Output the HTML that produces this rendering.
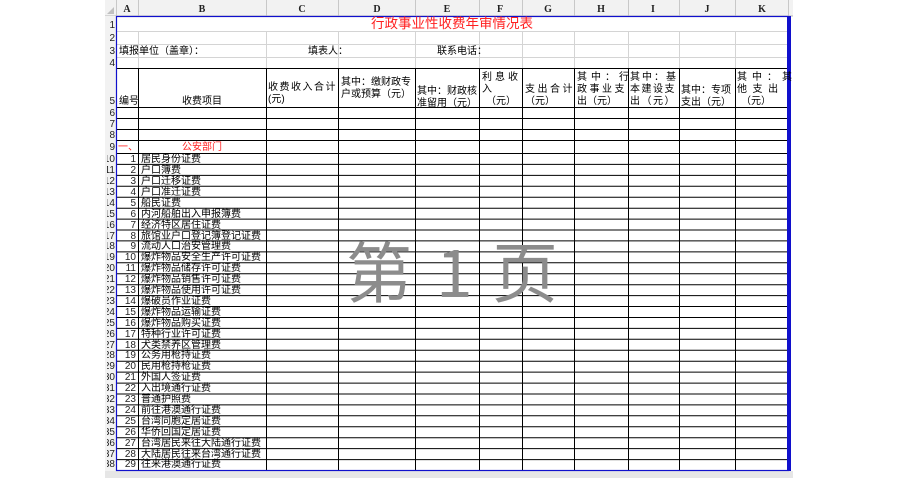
<!DOCTYPE html>
<html><head><meta charset="utf-8"><style>
html,body{margin:0;padding:0;background:#fff;width:900px;height:478px;overflow:hidden}
svg{display:block}
text{font-family:"Liberation Sans","Noto Sans CJK SC",sans-serif}
.t{font-size:10px;fill:#000}
.h{font-size:10px;fill:#222;font-family:"Liberation Serif","Noto Serif CJK SC",serif}
.r{font-size:10px;fill:#222;text-anchor:end}
.wm{font-size:66px;fill:#8c8c8c;font-family:"Noto Sans CJK SC","Liberation Sans",sans-serif}
</style></head><body>
<svg width="900" height="478" viewBox="0 0 900 478">
<defs><clipPath id="rh"><rect x="107" y="0" width="9" height="478"/></clipPath></defs>
<rect x="105" y="0" width="688" height="16" fill="#f2f2f2"/>
<polygon points="107,14 114,14 114,7" fill="#c0c0c0"/>
<line x1="105" y1="16" x2="793" y2="16" stroke="#b8b8b8"/>
<rect x="105" y="16" width="11" height="455" fill="#f2f2f2"/>
<rect x="105" y="471" width="688" height="7" fill="#e6e6e6"/>
<g stroke="#c8c8c8" stroke-width="1">
<line x1="116.5" y1="0" x2="116.5" y2="16"/><line x1="138.5" y1="0" x2="138.5" y2="16"/><line x1="266.5" y1="0" x2="266.5" y2="16"/><line x1="338.5" y1="0" x2="338.5" y2="16"/><line x1="415.5" y1="0" x2="415.5" y2="16"/><line x1="479.5" y1="0" x2="479.5" y2="16"/><line x1="522.5" y1="0" x2="522.5" y2="16"/><line x1="574.5" y1="0" x2="574.5" y2="16"/><line x1="628.5" y1="0" x2="628.5" y2="16"/><line x1="679.5" y1="0" x2="679.5" y2="16"/><line x1="735.5" y1="0" x2="735.5" y2="16"/><line x1="788.5" y1="0" x2="788.5" y2="16"/>
</g>
<g class="h" text-anchor="middle" font-weight="bold">
<text x="127" y="12" class="h">A</text><text x="202" y="12" class="h">B</text><text x="302" y="12" class="h">C</text><text x="377" y="12" class="h">D</text><text x="447" y="12" class="h">E</text><text x="500" y="12" class="h">F</text><text x="548" y="12" class="h">G</text><text x="601" y="12" class="h">H</text><text x="653" y="12" class="h">I</text><text x="707" y="12" class="h">J</text><text x="762" y="12" class="h">K</text>
</g>
<g stroke="#d4d4d4">
<line x1="116" y1="31.5" x2="788" y2="31.5"/><line x1="116" y1="44.5" x2="788" y2="44.5"/><line x1="116" y1="57.5" x2="788" y2="57.5"/>
<line x1="138.5" y1="31" x2="138.5" y2="68"/><line x1="266.5" y1="31" x2="266.5" y2="68"/><line x1="338.5" y1="31" x2="338.5" y2="68"/><line x1="415.5" y1="31" x2="415.5" y2="68"/><line x1="479.5" y1="31" x2="479.5" y2="68"/><line x1="522.5" y1="31" x2="522.5" y2="68"/><line x1="574.5" y1="31" x2="574.5" y2="68"/><line x1="628.5" y1="31" x2="628.5" y2="68"/><line x1="679.5" y1="31" x2="679.5" y2="68"/><line x1="735.5" y1="31" x2="735.5" y2="68"/>
</g>
<g stroke="#000" stroke-width="1">
<line x1="116" y1="68.5" x2="788" y2="68.5"/><line x1="116" y1="107.5" x2="788" y2="107.5"/><line x1="116" y1="118.5" x2="788" y2="118.5"/><line x1="116" y1="129.5" x2="788" y2="129.5"/><line x1="116" y1="140.5" x2="788" y2="140.5"/><line x1="116" y1="153.5" x2="788" y2="153.5"/>
<line x1="116" y1="164.4" x2="788" y2="164.4"/><line x1="116" y1="175.4" x2="788" y2="175.4"/><line x1="116" y1="186.3" x2="788" y2="186.3"/><line x1="116" y1="197.2" x2="788" y2="197.2"/><line x1="116" y1="208.2" x2="788" y2="208.2"/><line x1="116" y1="219.1" x2="788" y2="219.1"/><line x1="116" y1="230" x2="788" y2="230"/><line x1="116" y1="240.9" x2="788" y2="240.9"/><line x1="116" y1="251.9" x2="788" y2="251.9"/><line x1="116" y1="262.8" x2="788" y2="262.8"/><line x1="116" y1="273.7" x2="788" y2="273.7"/><line x1="116" y1="284.7" x2="788" y2="284.7"/><line x1="116" y1="295.6" x2="788" y2="295.6"/><line x1="116" y1="306.5" x2="788" y2="306.5"/><line x1="116" y1="317.5" x2="788" y2="317.5"/><line x1="116" y1="328.4" x2="788" y2="328.4"/><line x1="116" y1="339.3" x2="788" y2="339.3"/><line x1="116" y1="350.3" x2="788" y2="350.3"/><line x1="116" y1="361.2" x2="788" y2="361.2"/><line x1="116" y1="372.1" x2="788" y2="372.1"/><line x1="116" y1="383.1" x2="788" y2="383.1"/><line x1="116" y1="394" x2="788" y2="394"/><line x1="116" y1="404.9" x2="788" y2="404.9"/><line x1="116" y1="415.8" x2="788" y2="415.8"/><line x1="116" y1="426.8" x2="788" y2="426.8"/><line x1="116" y1="437.7" x2="788" y2="437.7"/><line x1="116" y1="448.6" x2="788" y2="448.6"/><line x1="116" y1="459.6" x2="788" y2="459.6"/>
<line x1="138.5" y1="68" x2="138.5" y2="471"/><line x1="266.5" y1="68" x2="266.5" y2="471"/><line x1="338.5" y1="68" x2="338.5" y2="471"/><line x1="415.5" y1="68" x2="415.5" y2="471"/><line x1="479.5" y1="68" x2="479.5" y2="471"/><line x1="522.5" y1="68" x2="522.5" y2="471"/><line x1="574.5" y1="68" x2="574.5" y2="471"/><line x1="628.5" y1="68" x2="628.5" y2="471"/><line x1="679.5" y1="68" x2="679.5" y2="471"/><line x1="735.5" y1="68" x2="735.5" y2="471"/>
</g>
<rect x="116.5" y="16.5" width="672" height="454" fill="none" stroke="#1010cc" stroke-width="1.2"/>
<rect x="787" y="16" width="4" height="455" fill="#1010cc"/>
<g clip-path="url(#rh)">
<text x="115" y="28" class="r">1</text><text x="115" y="41" class="r">2</text><text x="115" y="54" class="r">3</text><text x="115" y="66" class="r">4</text><text x="115" y="104" class="r">5</text><text x="115" y="116" class="r">6</text><text x="115" y="127" class="r">7</text><text x="115" y="138" class="r">8</text><text x="115" y="150" class="r">9</text>
<text x="115" y="162" class="r">10</text><text x="115" y="173" class="r">11</text><text x="115" y="184" class="r">12</text><text x="115" y="195" class="r">13</text><text x="115" y="206" class="r">14</text><text x="115" y="217" class="r">15</text><text x="115" y="228" class="r">16</text><text x="115" y="239" class="r">17</text><text x="115" y="249" class="r">18</text><text x="115" y="260" class="r">19</text><text x="115" y="271" class="r">20</text><text x="115" y="282" class="r">21</text><text x="115" y="293" class="r">22</text><text x="115" y="304" class="r">23</text><text x="115" y="315" class="r">24</text><text x="115" y="326" class="r">25</text><text x="115" y="337" class="r">26</text><text x="115" y="348" class="r">27</text><text x="115" y="358" class="r">28</text><text x="115" y="369" class="r">29</text><text x="115" y="380" class="r">30</text><text x="115" y="391" class="r">31</text><text x="115" y="402" class="r">32</text><text x="115" y="413" class="r">33</text><text x="115" y="424" class="r">34</text><text x="115" y="435" class="r">35</text><text x="115" y="446" class="r">36</text><text x="115" y="457" class="r">37</text><text x="115" y="467" class="r">38</text>
</g>
<text x="452" y="28" text-anchor="middle" font-size="13.5" fill="#ff2020">行政事业性收费年审情况表</text>
<text x="119" y="54" class="t">填报单位（盖章）：</text>
<text x="308" y="54" class="t">填表人：</text>
<text x="437" y="54" class="t">联系电话：</text>
<g class="t">
<text x="119" y="104" class="t">编号</text>
<text x="202" y="104" class="t" text-anchor="middle">收费项目</text>
<text x="268" y="90" class="t" letter-spacing="1.5">收费收入合计</text><text x="268" y="102" class="t">(元)</text>
<text x="341" y="85" class="t">其中：缴财政专</text><text x="341" y="97" class="t">户或预算（元）</text>
<text x="417" y="94" class="t">其中：财政核</text><text x="417" y="106" class="t">准留用（元）</text>
<text x="482" y="80" class="t" letter-spacing="3">利息收</text><text x="482" y="92" class="t">入</text><text x="486" y="104" class="t">（元）</text>
<text x="525" y="92" class="t" letter-spacing="2.5">支出合计</text><text x="525" y="104" class="t">（元）</text>
<text x="577" y="80" class="t" letter-spacing="4">其中：行</text><text x="577" y="92" class="t" letter-spacing="2.5">政事业支</text><text x="577" y="104" class="t">出（元）</text>
<text x="630" y="80" class="t" letter-spacing="2">其中：基</text><text x="630" y="92" class="t" letter-spacing="1.5">本建设支</text><text x="630" y="104" class="t" letter-spacing="1.5">出（元）</text>
<text x="681" y="93" class="t">其中：专项</text><text x="681" y="105" class="t">支出（元）</text>
<text x="737" y="80" class="t" letter-spacing="5">其中：其</text><text x="737" y="92" class="t" xml:space="preserve">他  支  出</text><text x="741" y="104" class="t">（元）</text>
</g>
<text x="118" y="150" font-size="10" fill="#ff2020">一、</text>
<text x="202" y="150" font-size="10" fill="#ff2020" text-anchor="middle">公安部门</text>
<g class="t">
<text x="136" y="162" class="r">1</text><text x="141" y="162" class="t">居民身份证费</text>
<text x="136" y="173" class="r">2</text><text x="141" y="173" class="t">户口簿费</text>
<text x="136" y="184" class="r">3</text><text x="141" y="184" class="t">户口迁移证费</text>
<text x="136" y="195" class="r">4</text><text x="141" y="195" class="t">户口准迁证费</text>
<text x="136" y="206" class="r">5</text><text x="141" y="206" class="t">船民证费</text>
<text x="136" y="217" class="r">6</text><text x="141" y="217" class="t">内河船舶出入申报簿费</text>
<text x="136" y="228" class="r">7</text><text x="141" y="228" class="t">经济特区居住证费</text>
<text x="136" y="239" class="r">8</text><text x="141" y="239" class="t">旅馆业户口登记簿登记证费</text>
<text x="136" y="249" class="r">9</text><text x="141" y="249" class="t">流动人口治安管理费</text>
<text x="136" y="260" class="r">10</text><text x="141" y="260" class="t">爆炸物品安全生产许可证费</text>
<text x="136" y="271" class="r">11</text><text x="141" y="271" class="t">爆炸物品储存许可证费</text>
<text x="136" y="282" class="r">12</text><text x="141" y="282" class="t">爆炸物品销售许可证费</text>
<text x="136" y="293" class="r">13</text><text x="141" y="293" class="t">爆炸物品使用许可证费</text>
<text x="136" y="304" class="r">14</text><text x="141" y="304" class="t">爆破员作业证费</text>
<text x="136" y="315" class="r">15</text><text x="141" y="315" class="t">爆炸物品运输证费</text>
<text x="136" y="326" class="r">16</text><text x="141" y="326" class="t">爆炸物品购买证费</text>
<text x="136" y="337" class="r">17</text><text x="141" y="337" class="t">特种行业许可证费</text>
<text x="136" y="348" class="r">18</text><text x="141" y="348" class="t">犬类禁养区管理费</text>
<text x="136" y="358" class="r">19</text><text x="141" y="358" class="t">公务用枪持证费</text>
<text x="136" y="369" class="r">20</text><text x="141" y="369" class="t">民用枪持枪证费</text>
<text x="136" y="380" class="r">21</text><text x="141" y="380" class="t">外国人签证费</text>
<text x="136" y="391" class="r">22</text><text x="141" y="391" class="t">入出境通行证费</text>
<text x="136" y="402" class="r">23</text><text x="141" y="402" class="t">普通护照费</text>
<text x="136" y="413" class="r">24</text><text x="141" y="413" class="t">前往港澳通行证费</text>
<text x="136" y="424" class="r">25</text><text x="141" y="424" class="t">台湾同胞定居证费</text>
<text x="136" y="435" class="r">26</text><text x="141" y="435" class="t">华侨回国定居证费</text>
<text x="136" y="446" class="r">27</text><text x="141" y="446" class="t">台湾居民来往大陆通行证费</text>
<text x="136" y="457" class="r">28</text><text x="141" y="457" class="t">大陆居民往来台湾通行证费</text>
<text x="136" y="467" class="r">29</text><text x="141" y="467" class="t">往来港澳通行证费</text>
</g>
<text x="346" y="297" class="wm">第</text>
<text x="436" y="297" class="wm" font-family="Liberation Sans">1</text>
<text x="492" y="297" class="wm">页</text>
</svg>
</body></html>
